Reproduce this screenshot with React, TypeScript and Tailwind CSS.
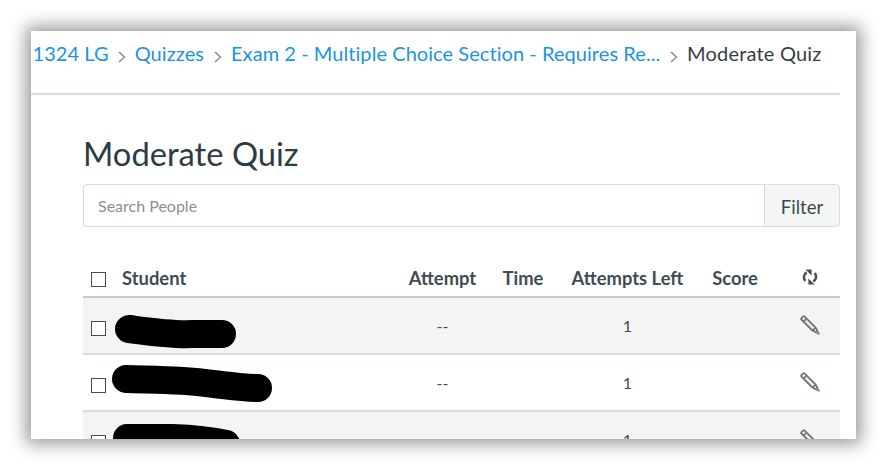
import React from "react";

const lato = { fontFamily: "Lato, sans-serif" };

function Chevron() {
  return (
    <svg width="8" height="12" viewBox="0 0 8 12" className="mx-[9.5px] mt-[11px] shrink-0" fill="none" stroke="#80878e" strokeWidth="1.4">
      <path d="M1 1l5.5 5L1 11" />
    </svg>
  );
}

function Refresh() {
  return (
    <svg width="16" height="16" viewBox="0 0 16 16" fill="none" stroke="#474e54" strokeWidth="2.6">
      <path d="M3.2 12C1.2 9 1.6 5.6 4.6 3.4" />
      <path d="M12.8 4c2 3 1.6 6.4-1.4 8.6" />
      <path d="M3.4 .6H9.6V6.6z" fill="#474e54" stroke="none" />
      <path d="M12.6 15.4H6.4V9.4z" fill="#474e54" stroke="none" />
    </svg>
  );
}

function Pencil() {
  return (
    <svg width="20" height="20" viewBox="0 0 20 20" fill="none" stroke="#656c72" strokeWidth="1.7" strokeLinejoin="round">
      <path d="M1.5 3.2 3.2 1.5a1 1 0 0 1 1.4 0L15.6 12.5 18.8 18.8 12.5 15.6 1.5 4.6a1 1 0 0 1 0-1.4z" />
      <path d="M3.5 6.6 6.6 3.5M15.6 12.5l-3.1 3.1" />
      <path d="M5.5 3.8 14.8 13M3.8 5.5 13 14.8" stroke="#9aa0a5" strokeWidth="1" />
      <path d="M16.6 16.6 18.8 18.8" stroke="#c98a45" strokeWidth="1.4" />
    </svg>
  );
}

function Check() {
  return <span className="block w-[15px] h-[15px] border border-[#4a4a4a] bg-white" />;
}

const grid = "grid grid-cols-[39px_273px_95px_66px_143px_72px_69px] items-center";

function Row({ shaded, blob, h }: { shaded: boolean; blob: React.ReactNode; h: string }) {
  return (
    <div className={`${grid} ${h} shrink-0 border-b-2 border-[#d8dee3] ${shaded ? "bg-[#f4f4f4]" : "bg-white"} text-[16px] text-[#444a50]`}>
      <span className="pl-2 pt-[5px]"><Check /></span>
      <span className="relative h-full">{blob}</span>
      <span className="text-center pt-[1px]">--</span>
      <span />
      <span className="text-center pt-[1px]">1</span>
      <span />
      <span className="pl-[29px] -mt-[1px]"><Pencil /></span>
    </div>
  );
}

function Blob({ d, w, h, left, top, sw }: { d: string; w: number; h: number; left: string; top: string; sw: number }) {
  return (
    <svg width={w} height={h} viewBox={`0 0 ${w} ${h}`} className={`absolute ${left} ${top}`} fill="none" stroke="#000" strokeWidth={sw} strokeLinecap="round" strokeLinejoin="round">
      <path d={d} />
    </svg>
  );
}

export default function App() {
  return (
    <div className="w-[887px] h-[470px] bg-white pt-[31px] pl-[31px] overflow-hidden" style={lato}>
      <div className="w-[825px] h-[408px] bg-white overflow-hidden pr-4 shadow-[0_0_16px_5px_rgba(0,0,0,0.4)] flex flex-col">
        <nav className="h-[64px] shrink-0 border-b-2 border-[#d6dce1] flex items-start pt-[9px] pl-[1.5px] text-[20px] leading-[26px] tracking-[0.003em] whitespace-nowrap">
          <a className="text-[#1a94e6]">1324 LG</a>
          <Chevron />
          <a className="text-[#1a94e6] -ml-[1px]">Quizzes</a>
          <Chevron />
          <a className="text-[#1a94e6] w-[429px]">Exam 2 - Multiple Choice Section - Requires Re...</a>
          <Chevron />
          <span className="text-[#363d44] tracking-[0.01em]">Moderate Quiz</span>
        </nav>
        <main className="pl-[52px] flex flex-col">
          <h1 className="mt-[38px] text-[32.7px] leading-[42px] text-[#2d3b45]">Moderate Quiz</h1>
          <div className="mt-[9px] flex h-[43px] shrink-0">
            <div className="flex-1 border border-[#d6dce1] border-r-0 rounded-l-[4px] flex items-center pl-[14px] pt-[1px] text-[16px] text-[#8a9095]">
              Search People
            </div>
            <button className="w-[76px] border border-[#d6dce1] rounded-r-[4px] bg-[#f4f5f5] pt-[4px] text-[18.5px] text-[#3f474e]">Filter</button>
          </div>
          <div className={`${grid} mt-[33px] h-[38px] shrink-0 border-b-2 border-[#c3cad0] text-[18.4px] font-bold text-[#3f4b55]`}>
            <span className="pl-2 pt-[2px]"><Check /></span>
            <span className="pt-[2px]">Student</span>
            <span className="text-center pt-[2px]">Attempt</span>
            <span className="text-center pt-[2px]">Time</span>
            <span className="text-center pt-[2px]">Attempts Left</span>
            <span className="text-center pt-[2px]">Score</span>
            <span className="pl-[31px] -mt-[3px]"><Refresh /></span>
          </div>
          <Row shaded h="h-[57px]" blob={<Blob w={130} h={40} left="-left-[10px]" top="top-[15px]" sw={28} d="M17 16C40 19 60 22 80 21L110 21" />} />
          <Row shaded={false} h="h-[57px]" blob={<Blob w={166} h={42} left="-left-[12px]" top="top-[10px]" sw={28} d="M16 14C50 15 75 15 95 18C115 20 130 23 148 23" />} />
          <Row shaded h="h-[57px]" blob={<Blob w={140} h={40} left="-left-[12px]" top="top-[12px]" sw={28} d="M17 14C50 13 85 13 116 20" />} />
        </main>
      </div>
    </div>
  );
}
